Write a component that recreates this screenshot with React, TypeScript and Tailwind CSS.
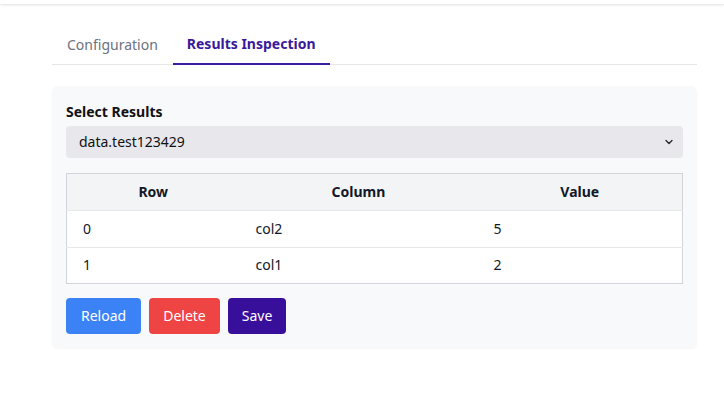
import { ChevronDown } from 'lucide-react';

const rows = [
    { row: '0', column: 'col2', value: '5' },
    { row: '1', column: 'col1', value: '2' },
];

export default function App() {
    return (
        <div
            className="min-h-[406px] w-[724px] bg-white text-sm text-[#111827]"
            style={{ fontFamily: '"Noto Sans", "Open Sans", sans-serif' }}
        >
            <div className="h-[4px] w-full shadow-[0_1px_3px_rgba(0,0,0,0.12)]" />
            <div className="pl-[52px] pr-[27px] pt-[30px]">
                <div className="flex border-b border-[#e5e7eb]">
                    <button className="px-[15px] pb-[9px] text-[#6b7280]">Configuration</button>
                    <button className="-mb-px border-b-2 border-[#3a1d9c] px-[14px] pb-[9px] font-bold text-[#3a1a9a]">
                        Results Inspection
                    </button>
                </div>
                <div className="mt-[21px] rounded-md bg-[#f8f9fb] px-[14px] pb-[14px] pt-[16px] shadow-[0_1px_2px_rgba(0,0,0,0.04)]">
                    <label className="block font-bold text-[#111]">Select Results</label>
                    <div className="mt-[4px] flex h-[32px] items-center justify-between rounded-[4px] bg-[#e8e8ec] pl-[13px] pr-[8px]">
                        <span className="text-[#111]">data.test123429</span>
                        <ChevronDown size={12} strokeWidth={2.5} className="text-[#222]" />
                    </div>
                    <table className="mt-[15px] w-full border-collapse border border-[#d1d5db]">
                        <thead>
                            <tr className="h-[37px] bg-[#f3f4f6]">
                                <th className="w-[173px] px-4 text-center font-bold">Row</th>
                                <th className="w-[238px] px-4 text-center font-bold">Column</th>
                                <th className="px-4 text-center font-bold">Value</th>
                            </tr>
                        </thead>
                        <tbody className="bg-white">
                            {rows.map((r) => (
                                <tr key={r.row} className="h-[36.5px] border-t border-[#e5e7eb]">
                                    <td className="px-4">{r.row}</td>
                                    <td className="px-4">{r.column}</td>
                                    <td className="px-4">{r.value}</td>
                                </tr>
                            ))}
                        </tbody>
                    </table>
                    <div className="mt-[14px] flex gap-[8px]">
                        <button className="h-[36px] rounded-[4px] bg-[#3b82f6] px-[15px] text-white">Reload</button>
                        <button className="h-[36px] rounded-[4px] bg-[#ef4444] px-[14px] text-white">Delete</button>
                        <button className="h-[36px] rounded-[4px] bg-[#370f9b] px-[14px] text-white">Save</button>
                    </div>
                </div>
            </div>
        </div>
    );
}
